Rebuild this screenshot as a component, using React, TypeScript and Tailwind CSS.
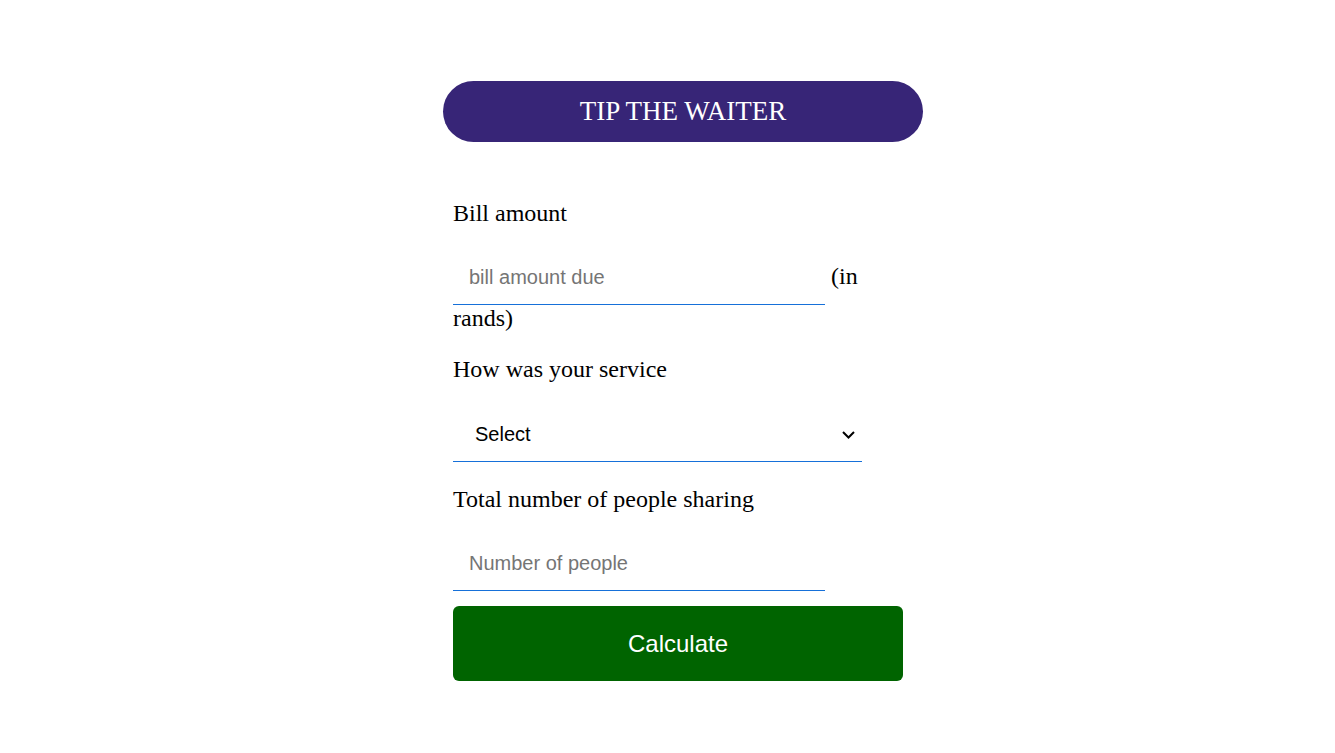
import { useState } from "react";

const serif = "font-['Liberation_Serif','Times_New_Roman',serif]";
const sans = "font-['Liberation_Sans',Arial,sans-serif]";

export default function App() {
  const [bill, setBill] = useState("");
  const [service, setService] = useState("");
  const [people, setPeople] = useState("");

  return (
    <div className={`min-h-[753px] bg-white pt-[81px] pl-[443px] ${serif}`}>
      {/* Title pill */}
      <div className="w-[480px] h-[61px] rounded-full bg-[#372577] flex items-center justify-center">
        <h1 className="text-white text-[27px] leading-none">TIP THE WAITER</h1>
      </div>

      {/* Form */}
      <form className="ml-[10px] w-[450px] mt-[58px] text-[24px] leading-[27px] text-black" onSubmit={(e) => e.preventDefault()}>
        <label className="block">Bill amount</label>
        <div className="mt-[23px]">
          <input
            type="text"
            placeholder="bill amount due"
            value={bill}
            onChange={(e) => setBill(e.target.value)}
            className={`w-[372px] h-[55px] pl-4 pr-2 border-b border-[#1670d9] outline-none text-[20px] placeholder-[#757575] align-baseline ${sans}`}
          />{" "}
          (in rands)
        </div>

        <label className="block mt-[24px]">How was your service</label>
        <div className="relative mt-[24px] w-[409px]">
          <select
            value={service}
            onChange={(e) => setService(e.target.value)}
            className={`block w-full h-[55px] pl-[22px] pr-8 appearance-none bg-white border-b border-[#1670d9] outline-none text-[20px] text-black ${sans}`}
          >
            <option value="">Select</option>
            <option value="0.3">Outstanding (30%)</option>
            <option value="0.2">Good (20%)</option>
            <option value="0.15">It was OK (15%)</option>
            <option value="0.1">Bad (10%)</option>
            <option value="0.05">Terrible (5%)</option>
          </select>
          <svg
            className="absolute right-[7px] top-[24px] pointer-events-none"
            width="13"
            height="8"
            viewBox="0 0 13 8"
            fill="none"
          >
            <path d="M1 1 L6.5 6.5 L12 1" stroke="#000" strokeWidth="2" />
          </svg>
        </div>

        <label className="block mt-[24px]">Total number of people sharing</label>
        <div className="mt-[23px]">
          <input
            type="text"
            placeholder="Number of people"
            value={people}
            onChange={(e) => setPeople(e.target.value)}
            className={`w-[372px] h-[55px] pl-4 pr-2 border-b border-[#1670d9] outline-none text-[20px] placeholder-[#757575] ${sans}`}
          />
        </div>

        <button
          type="submit"
          className={`block mt-[15px] w-[450px] h-[75px] rounded-[6px] bg-[#006400] text-white text-[24px] ${sans}`}
        >
          Calculate
        </button>
      </form>
    </div>
  );
}
